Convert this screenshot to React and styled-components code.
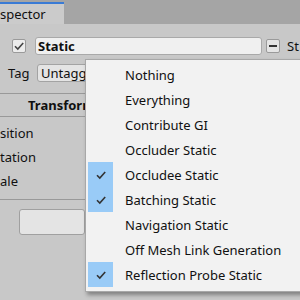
import React from 'react';
import styled, { createGlobalStyle } from 'styled-components';

const GlobalStyle = createGlobalStyle`
  html, body {
    margin: 0;
    padding: 0;
    background: #c8c8c8;
  }
  body {
    font-family: 'Noto Sans', 'Liberation Sans', sans-serif;
    font-size: 13px;
    color: #101010;
  }
`;

const Screen = styled.div`
  position: relative;
  width: 300px;
  height: 300px;
  overflow: hidden;
  background: #c8c8c8;
`;

const TabBar = styled.div`
  height: 24px;
  background: #a5a5a5;
  display: flex;
  align-items: flex-end;
`;

const Tab = styled.div`
  width: 64px;
  height: 19px;
  background: #cbcbcb;
  border-top: 2px solid #3a7bd5;
  display: flex;
  align-items: center;
  line-height: 1;
  padding-top: 1px;
`;

const Panel = styled.div`
  display: flex;
  flex-direction: column;
`;

const HeaderRow = styled.div`
  display: flex;
  align-items: center;
  height: 18px;
  margin-top: 13px;
  padding-left: 12px;
`;

const CheckBox = styled.div`
  width: 14px;
  height: 14px;
  box-sizing: border-box;
  border: 1px solid #9a9a9a;
  border-radius: 2px;
  background: #ececec;
  display: flex;
  align-items: center;
  justify-content: center;
  margin-right: 9px;
`;

const NameField = styled.div`
  width: 227px;
  height: 18px;
  box-sizing: border-box;
  border: 1px solid #a9a9a9;
  border-radius: 3px;
  background: #f0f0f0;
  font-weight: 700;
  display: flex;
  align-items: center;
  padding-left: 2px;
  margin-right: 4px;
`;

const MixedToggle = styled.div`
  width: 14px;
  height: 14px;
  box-sizing: border-box;
  border: 1px solid #9a9a9a;
  border-radius: 2px;
  background: #e4e4e4;
  display: flex;
  align-items: center;
  justify-content: center;
  margin-right: 7px;
  &::after {
    content: '';
    width: 8px;
    height: 2px;
    background: #333;
  }
`;

const TagRow = styled.div`
  display: flex;
  align-items: center;
  height: 18px;
  margin-top: 9px;
  padding-left: 8px;
`;

const Label = styled.span`
  width: 29px;
  white-space: nowrap;
`;

const Dropdown = styled.div`
  width: 90px;
  height: 18px;
  box-sizing: border-box;
  border: 1px solid #a3a3a3;
  border-radius: 3px;
  background: #e4e4e4;
  display: flex;
  align-items: center;
  padding-left: 3px;
  white-space: nowrap;
`;

const Divider = styled.div`
  height: 1px;
  background: #999;
  margin-top: ${(p) => p.$gap || 0}px;
`;

const ComponentHeader = styled.div`
  height: 22px;
  display: flex;
  align-items: center;
  padding-left: 28px;
  font-weight: 700;
  white-space: nowrap;
`;

const FieldRow = styled.div`
  height: 24px;
  display: flex;
  align-items: center;
  white-space: nowrap;
`;

const Rows = styled.div`
  padding-top: 4px;
  padding-bottom: 6px;
`;

const WideButton = styled.div`
  width: 66px;
  height: 26px;
  box-sizing: border-box;
  margin: 9px 0 0 19px;
  border: 1px solid #a0a0a0;
  border-radius: 3px;
  background: #e4e4e4;
`;

const Menu = styled.div`
  position: absolute;
  left: 85px;
  top: 59px;
  width: 240px;
  height: 233px;
  box-sizing: border-box;
  padding: 2px 0 0 2px;
  background: #f2f2f2;
  border: 1px solid #a8a8a8;
  box-shadow: 2px 3px 4px rgba(0, 0, 0, 0.35);
`;

const MenuItem = styled.div`
  display: flex;
  align-items: center;
  height: 25px;
  white-space: nowrap;
`;

const CheckCell = styled.div`
  width: 25px;
  height: 25px;
  margin-right: 12px;
  background: ${(p) => (p.$on ? '#99cbf7' : 'transparent')};
  display: flex;
  align-items: center;
  justify-content: center;
`;

const Tick = ({ size = 12, color = '#333' }) => (
  <svg width={size} height={size} viewBox="0 0 12 12">
    <path d="M2 6.2 L4.8 9 L10.2 3" fill="none" stroke={color} strokeWidth="1.6" />
  </svg>
);

const items = [
  ['Nothing', false],
  ['Everything', false],
  ['Contribute GI', false],
  ['Occluder Static', false],
  ['Occludee Static', true],
  ['Batching Static', true],
  ['Navigation Static', false],
  ['Off Mesh Link Generation', false],
  ['Reflection Probe Static', true],
];

export default function App() {
  return (
    <Screen>
      <GlobalStyle />
      <TabBar>
        <Tab>spector</Tab>
      </TabBar>
      <Panel>
        <HeaderRow>
          <CheckBox>
            <Tick size={12} color="#444" />
          </CheckBox>
          <NameField>Static</NameField>
          <MixedToggle />
          <span>St</span>
        </HeaderRow>
        <TagRow>
          <Label>Tag</Label>
          <Dropdown>Untagged</Dropdown>
        </TagRow>
        <Divider $gap={11} />
        <ComponentHeader>Transform</ComponentHeader>
        <Divider />
        <Rows>
          <FieldRow>sition</FieldRow>
          <FieldRow>tation</FieldRow>
          <FieldRow>ale</FieldRow>
        </Rows>
        <Divider />
        <WideButton />
      </Panel>
      <Menu>
        {items.map(([name, on]) => (
          <MenuItem key={name}>
            <CheckCell $on={on}>{on && <Tick />}</CheckCell>
            {name}
          </MenuItem>
        ))}
      </Menu>
    </Screen>
  );
}
